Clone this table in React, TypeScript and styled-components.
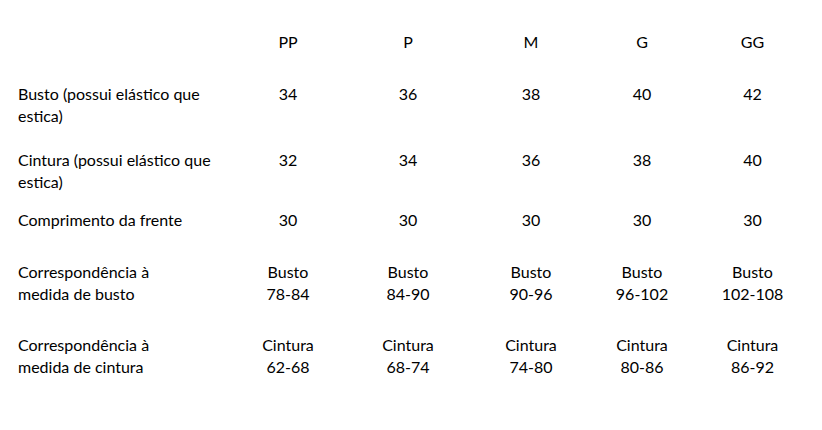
import React from "react";
import styled, { createGlobalStyle } from "styled-components";

const Global = createGlobalStyle`
  html, body { margin: 0; padding: 0; background: #ffffff; }
  body { font-family: Lato, "Liberation Sans", sans-serif; color: #000; }
`;

const Page = styled.div`
  width: 822px;
  height: 430px;
  box-sizing: border-box;
  padding: 31px 0 0 18px;
  background: #fff;
`;

const Table = styled.div`
  display: flex;
  flex-direction: column;
`;

const Row = styled.div<{ $h: number }>`
  display: grid;
  grid-template-columns: 210px 120px 120px 126px 96px 125px;
  height: ${(p) => p.$h}px;
  align-items: start;
`;

const Label = styled.div`
  font-size: 16px;
  line-height: 21.5px;
  text-align: left;
`;

const Cell = styled.div`
  font-size: 16px;
  line-height: 21.5px;
  text-align: center;
`;

const Line = styled.div`
  white-space: nowrap;
`;

type RowData = { h: number; label: string[]; cells: string[][] };

const rows: RowData[] = [
  { h: 52, label: [], cells: [["PP"], ["P"], ["M"], ["G"], ["GG"]] },
  {
    h: 66,
    label: ["Busto (possui elástico que", "estica)"],
    cells: [["34"], ["36"], ["38"], ["40"], ["42"]],
  },
  {
    h: 60,
    label: ["Cintura (possui elástico que", "estica)"],
    cells: [["32"], ["34"], ["36"], ["38"], ["40"]],
  },
  {
    h: 52,
    label: ["Comprimento da frente"],
    cells: [["30"], ["30"], ["30"], ["30"], ["30"]],
  },
  {
    h: 73,
    label: ["Correspondência à", "medida de busto"],
    cells: [
      ["Busto", "78-84"],
      ["Busto", "84-90"],
      ["Busto", "90-96"],
      ["Busto", "96-102"],
      ["Busto", "102-108"],
    ],
  },
  {
    h: 60,
    label: ["Correspondência à", "medida de cintura"],
    cells: [
      ["Cintura", "62-68"],
      ["Cintura", "68-74"],
      ["Cintura", "74-80"],
      ["Cintura", "80-86"],
      ["Cintura", "86-92"],
    ],
  },
];

export default function App() {
  return (
    <>
      <Global />
      <Page>
        <Table>
          {rows.map((r, i) => (
            <Row key={i} $h={r.h}>
              <Label>
                {r.label.map((l, j) => (
                  <Line key={j}>{l}</Line>
                ))}
              </Label>
              {r.cells.map((c, k) => (
                <Cell key={k}>
                  {c.map((l, j) => (
                    <Line key={j}>{l}</Line>
                  ))}
                </Cell>
              ))}
            </Row>
          ))}
        </Table>
      </Page>
    </>
  );
}
